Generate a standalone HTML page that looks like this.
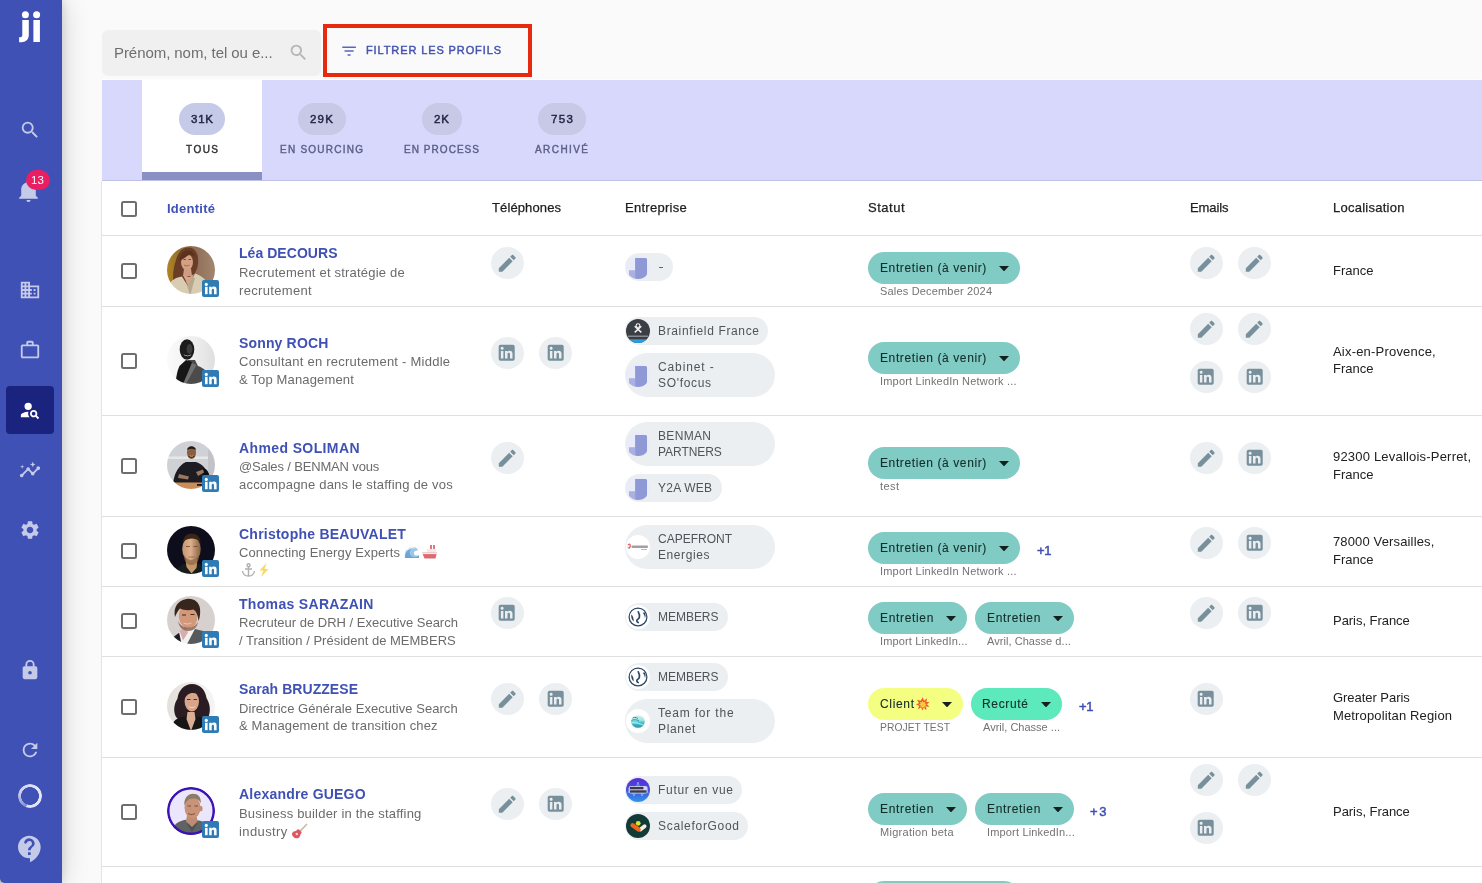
<!DOCTYPE html>
<html><head><meta charset="utf-8"><title>Profils</title><style>
html,body{margin:0;padding:0;}
body{width:1482px;height:883px;overflow:hidden;background:#fafafa;position:relative;font-family:"Liberation Sans",sans-serif;}
body>div,body>span,body>svg{position:absolute;display:block;}
body>span{white-space:nowrap;line-height:20px;will-change:transform;}
</style></head><body>
<div style="left:102px;top:181px;width:1380px;height:702px;background:#fff;"></div>
<div style="left:101px;top:181px;width:1px;height:702px;background:#e4e4e4;"></div>
<div style="left:102px;top:79px;width:1380px;height:1px;background:rgba(255,255,255,.7);"></div>
<div style="left:102px;top:80px;width:1380px;height:100px;background:#d7d8fc;"></div>
<div style="left:102px;top:180px;width:1380px;height:1px;background:#bfc0e6;"></div>
<div style="left:142px;top:80px;width:120px;height:100px;background:#fff;"></div>
<div style="left:142px;top:172px;width:120px;height:8px;background:#8a90c4;"></div>
<div style="left:102px;top:30px;width:219px;height:46px;background:#f0f0f0;border-radius:6px;"></div>
<span style="left:113.80px;top:43.00px;font-size:15px;font-weight:400;color:#6e6e6e;letter-spacing:-0.064px;">Prénom, nom, tel ou e...</span>
<svg style="left:288.00px;top:42.20px;" width="21" height="21" viewBox="0 0 24 24"><path fill="#b5b5b5" d="M9.5,3A6.5,6.5 0 0,1 16,9.5C16,11.11 15.41,12.59 14.44,13.73L14.71,14H15.5L20.5,19L19,20.5L14,15.5V14.71L13.73,14.44C12.59,15.41 11.11,16 9.5,16A6.5,6.5 0 0,1 3,9.5A6.5,6.5 0 0,1 9.5,3M9.5,5C7,5 5,7 5,9.5C5,12 7,14 9.5,14C12,14 14,12 14,9.5C14,7 12,5 9.5,5Z"/></svg>
<div style="left:323px;top:24px;width:201px;height:45px;border:4px solid #e6290f;"></div>
<svg style="left:339.90px;top:41.70px;" width="18.2" height="18.2" viewBox="0 0 24 24"><path fill="#5c64c2" d="M6,13H18V11H6M3,6V8H21V6M10,18H14V16H10V18Z"/></svg>
<span style="left:365.80px;top:40.00px;font-size:11px;font-weight:400;color:#4452b0;letter-spacing:0.889px;-webkit-text-stroke:.45px #4452b0;">FILTRER LES PROFILS</span>
<div style="left:179.0px;top:103px;width:46px;height:32px;background:#c5cae9;border-radius:16px;"></div>
<span style="left:190.60px;top:109.00px;font-size:11.5px;font-weight:400;color:#1f2340;letter-spacing:0.769px;-webkit-text-stroke:.45px #1f2340;">31K</span>
<span style="left:185.60px;top:140.00px;font-size:10px;font-weight:400;color:#2f2f33;letter-spacing:1.467px;-webkit-text-stroke:.4px #2f2f33;">TOUS</span>
<div style="left:298.0px;top:103px;width:48px;height:32px;background:#c8c9e6;border-radius:16px;"></div>
<span style="left:310.15px;top:109.00px;font-size:11.5px;font-weight:400;color:#1f2340;letter-spacing:1.219px;-webkit-text-stroke:.45px #1f2340;">29K</span>
<span style="left:280.40px;top:140.00px;font-size:10px;font-weight:400;color:#5b5f88;letter-spacing:1.244px;-webkit-text-stroke:.4px #5b5f88;">EN SOURCING</span>
<div style="left:421.75px;top:103px;width:40.5px;height:32px;background:#c8c9e6;border-radius:16px;"></div>
<span style="left:434.15px;top:109.00px;font-size:11.5px;font-weight:400;color:#1f2340;letter-spacing:0.834px;-webkit-text-stroke:.45px #1f2340;">2K</span>
<span style="left:404.40px;top:140.00px;font-size:10px;font-weight:400;color:#5b5f88;letter-spacing:1.048px;-webkit-text-stroke:.4px #5b5f88;">EN PROCESS</span>
<div style="left:538.0px;top:103px;width:48px;height:32px;background:#c8c9e6;border-radius:16px;"></div>
<span style="left:550.65px;top:109.00px;font-size:11.5px;font-weight:400;color:#1f2340;letter-spacing:1.356px;-webkit-text-stroke:.45px #1f2340;">753</span>
<span style="left:535.40px;top:140.00px;font-size:10px;font-weight:400;color:#5b5f88;letter-spacing:1.424px;-webkit-text-stroke:.4px #5b5f88;">ARCHIVÉ</span>
<div style="left:102px;top:235px;width:1380px;height:1px;background:#e0e0e0;"></div>
<div style="left:102px;top:306px;width:1380px;height:1px;background:#e0e0e0;"></div>
<div style="left:102px;top:415px;width:1380px;height:1px;background:#e0e0e0;"></div>
<div style="left:102px;top:516px;width:1380px;height:1px;background:#e0e0e0;"></div>
<div style="left:102px;top:586px;width:1380px;height:1px;background:#e0e0e0;"></div>
<div style="left:102px;top:656px;width:1380px;height:1px;background:#e0e0e0;"></div>
<div style="left:102px;top:757px;width:1380px;height:1px;background:#e0e0e0;"></div>
<div style="left:102px;top:866px;width:1380px;height:1px;background:#e0e0e0;"></div>
<div style="left:120.6px;top:200.8px;width:12px;height:12px;border:2px solid #6e6e6e;border-radius:2.5px;"></div>
<span style="left:166.90px;top:199.00px;font-size:13px;font-weight:700;color:#3f51b5;letter-spacing:0.254px;">Identité</span>
<span style="left:491.50px;top:198.00px;font-size:13px;font-weight:400;color:#1e1e1e;letter-spacing:0.118px;-webkit-text-stroke:.25px #1e1e1e;">Téléphones</span>
<span style="left:624.80px;top:198.00px;font-size:13px;font-weight:400;color:#1e1e1e;letter-spacing:0.272px;-webkit-text-stroke:.25px #1e1e1e;">Entreprise</span>
<span style="left:867.70px;top:198.00px;font-size:13px;font-weight:400;color:#1e1e1e;letter-spacing:0.527px;-webkit-text-stroke:.25px #1e1e1e;">Statut</span>
<span style="left:1189.70px;top:198.00px;font-size:13px;font-weight:400;color:#1e1e1e;letter-spacing:-0.101px;-webkit-text-stroke:.25px #1e1e1e;">Emails</span>
<span style="left:1332.70px;top:198.00px;font-size:13px;font-weight:400;color:#1e1e1e;letter-spacing:0.249px;-webkit-text-stroke:.25px #1e1e1e;">Localisation</span>
<div style="left:120.6px;top:262.8px;width:12px;height:12px;border:2px solid #6e6e6e;border-radius:2.5px;"></div>
<svg style="left:167px;top:246px" width="48" height="48" viewBox="0 0 48 48"><defs><clipPath id="a1"><circle cx="24" cy="24" r="24"/></clipPath><filter id="fa1" x="-10%" y="-10%" width="120%" height="120%"><feGaussianBlur stdDeviation="0.55"/></filter><linearGradient id="g1" x1="0" y1="0" x2="1" y2="0"><stop offset="0" stop-color="#bb8b1b"/><stop offset=".28" stop-color="#97712f"/><stop offset=".6" stop-color="#8f705a"/><stop offset="1" stop-color="#a98b73"/></linearGradient></defs><g clip-path="url(#a1)"><g filter="url(#fa1)"><rect x="-4" y="-4" width="56" height="56" fill="url(#g1)"/><path d="M6.500 38c-1-9 0-17 2.500-24C11 6 16 1 22 1.500c5.500.5 8.500 5 9 10.500.5 6-.5 10-2.500 14l-5 10H7z" fill="#693c26"/><ellipse cx="20" cy="16.300" rx="6" ry="8.200" fill="#d3a083"/><path d="M12.500 15.500c0-6.500 3-10.500 8-11 4.500 0 7 2.500 7.500 6.500-3-2.500-6-2.500-8.500-.5-2 1.500-4.500 3-7 5z" fill="#5b331f"/><path d="M16.500 13.500h2.500M21.500 13.500h2.500" stroke="#5a3a2c" stroke-width=".8"/><path d="M17 19c1.500 1.200 4 1.200 5.500 0" stroke="#a85a4c" stroke-width=".9" fill="none"/><path d="M17 22.500h7l1 7.500h-9z" fill="#cf9b82"/><path d="M1 40c3-6 8-8.500 14-9.500l6 10 7-13c6 2 10 5 13 10.500V52H1z" fill="#d8cdb3"/><path d="M16 29l5.500 11.500 5.500-12.500-4.500 3z" fill="#d5a48b"/><path d="M20.500 40.500l4.500-9.500 3 1-5 18z" fill="#b5a98f"/></g></g></svg>
<svg style="left:202px;top:280px" width="17" height="17" viewBox="0 0 17 17"><rect width="17" height="17" rx="2" fill="#2f7bb6"/><circle cx="4.3" cy="4.4" r="1.55" fill="#fff"/><rect x="3" y="6.8" width="2.6" height="7.4" fill="#fff"/><path fill="#fff" d="M7.2 6.8h2.5v1.1c.45-.8 1.3-1.3 2.3-1.3 1.9 0 2.6 1.2 2.6 3.1v4.5h-2.6v-4c0-.9-.3-1.5-1.1-1.5-.8 0-1.2.6-1.2 1.5v4H7.2z"/></svg>
<span style="left:239.20px;top:243.00px;font-size:14px;font-weight:700;color:#3f51b5;letter-spacing:0.048px;">Léa DECOURS</span>
<span style="left:239.20px;top:263.00px;font-size:13px;font-weight:400;color:#6b6b6b;letter-spacing:0.203px;">Recrutement et stratégie de</span>
<span style="left:239.20px;top:281.00px;font-size:13px;font-weight:400;color:#6b6b6b;letter-spacing:0.334px;">recrutement</span>
<div style="left:490.8px;top:246.7px;width:32.8px;height:32.8px;background:#eceff1;border-radius:50%;"></div>
<svg style="left:495.65px;top:251.55px;" width="22.5" height="22.5" viewBox="0 0 24 24"><path fill="#78909c" d="M20.71,7.04C21.1,6.65 21.1,6 20.71,5.63L18.37,3.29C18,2.9 17.35,2.9 16.96,3.29L15.12,5.12L18.87,8.87M3,17.25V21H6.75L17.81,9.93L14.06,6.18L3,17.25Z"/></svg>
<div style="left:625.3px;top:253px;width:47.7px;height:28px;background:#eceff1;border-radius:14px;"></div>
<svg style="left:626.3px;top:255px" width="24" height="24" viewBox="0 0 24 24"><defs><clipPath id="c626_255"><circle cx="12" cy="12" r="12"/></clipPath></defs><g clip-path="url(#c626_255)"><rect width="24" height="24" fill="#e9ebf8"/><path fill="#a9b0e2" d="M3 15.3h6.2V24H7a4 4 0 0 1-4-4z"/><path fill="#8e99d5" d="M9.1 3h11.9v15.5a5.5 5.5 0 0 1-5.5 5.5H9.1z"/></g></svg>
<div style="left:659.2px;top:266.5px;width:3.8px;height:1px;background:#666;"></div>
<div style="left:868px;top:252px;width:152px;height:32px;background:#80cbc4;border-radius:16px;"></div>
<span style="left:879.80px;top:258.00px;font-size:12px;font-weight:400;color:#142e2b;letter-spacing:0.607px;-webkit-text-stroke:.12px #142e2b;">Entretien (à venir)</span>
<svg style="left:998.90px;top:265.60px" width="10" height="5.4" viewBox="0 0 10 5.4"><path d="M0 0h10L5 5.4z" fill="#14201f"/></svg>
<span style="left:879.70px;top:281.00px;font-size:11px;font-weight:400;color:#737373;letter-spacing:0.176px;">Sales December 2024</span>
<div style="left:1189.8px;top:246.7px;width:32.8px;height:32.8px;background:#eceff1;border-radius:50%;"></div>
<svg style="left:1194.65px;top:251.55px;" width="22.5" height="22.5" viewBox="0 0 24 24"><path fill="#78909c" d="M20.71,7.04C21.1,6.65 21.1,6 20.71,5.63L18.37,3.29C18,2.9 17.35,2.9 16.96,3.29L15.12,5.12L18.87,8.87M3,17.25V21H6.75L17.81,9.93L14.06,6.18L3,17.25Z"/></svg>
<div style="left:1238.3px;top:246.7px;width:32.8px;height:32.8px;background:#eceff1;border-radius:50%;"></div>
<svg style="left:1243.15px;top:251.55px;" width="22.5" height="22.5" viewBox="0 0 24 24"><path fill="#78909c" d="M20.71,7.04C21.1,6.65 21.1,6 20.71,5.63L18.37,3.29C18,2.9 17.35,2.9 16.96,3.29L15.12,5.12L18.87,8.87M3,17.25V21H6.75L17.81,9.93L14.06,6.18L3,17.25Z"/></svg>
<span style="left:1332.70px;top:261.00px;font-size:13px;font-weight:400;color:#212121;letter-spacing:-0.012px;">France</span>
<div style="left:120.6px;top:352.8px;width:12px;height:12px;border:2px solid #6e6e6e;border-radius:2.5px;"></div>
<svg style="left:167px;top:336px" width="48" height="48" viewBox="0 0 48 48"><defs><clipPath id="a2"><circle cx="24" cy="24" r="24"/></clipPath><filter id="fa2" x="-10%" y="-10%" width="120%" height="120%"><feGaussianBlur stdDeviation="0.55"/></filter><linearGradient id="g2" x1="0" y1="0" x2="1" y2="0"><stop offset="0" stop-color="#fcfcfc"/><stop offset=".5" stop-color="#f1f1f1"/><stop offset="1" stop-color="#dcdcdc"/></linearGradient></defs><g clip-path="url(#a2)"><g filter="url(#fa2)"><rect x="-4" y="-4" width="56" height="56" fill="url(#g2)"/><path d="M9 50c0-11 2-18 9-21l3-5h7l3 6c6 2 10 6 11 12v8z" fill="#4b4b4b"/><path d="M12.500 30l6.500-6 6 2-8 23h-8c0-8 1-14 3.500-19z" fill="#141414"/><path d="M25 27l4.500 2-11 20h-3z" fill="#707070"/><ellipse cx="20" cy="13.500" rx="7.300" ry="10.300" fill="#1b1b1b"/><ellipse cx="22.500" cy="13" rx="3" ry="5" fill="#3c3c3c"/><path d="M16.500 18c2 2.200 6 2.200 8 0-1 3-7 3-8 0z" fill="#f2f2f2"/></g></g></svg>
<svg style="left:202px;top:370px" width="17" height="17" viewBox="0 0 17 17"><rect width="17" height="17" rx="2" fill="#2f7bb6"/><circle cx="4.3" cy="4.4" r="1.55" fill="#fff"/><rect x="3" y="6.8" width="2.6" height="7.4" fill="#fff"/><path fill="#fff" d="M7.2 6.8h2.5v1.1c.45-.8 1.3-1.3 2.3-1.3 1.9 0 2.6 1.2 2.6 3.1v4.5h-2.6v-4c0-.9-.3-1.5-1.1-1.5-.8 0-1.2.6-1.2 1.5v4H7.2z"/></svg>
<span style="left:239.20px;top:333.00px;font-size:14px;font-weight:700;color:#3f51b5;letter-spacing:0.157px;">Sonny ROCH</span>
<span style="left:239.20px;top:352.00px;font-size:13px;font-weight:400;color:#6b6b6b;letter-spacing:0.241px;">Consultant en recrutement - Middle</span>
<span style="left:239.20px;top:370.00px;font-size:13px;font-weight:400;color:#6b6b6b;letter-spacing:0.151px;">&amp; Top Management</span>
<div style="left:490.8px;top:336.7px;width:32.8px;height:32.8px;background:#eceff1;border-radius:50%;"></div>
<svg style="left:496.30px;top:342.00px;" width="21.4" height="21.4" viewBox="0 0 24 24"><path fill="#78909c" d="M19 3A2 2 0 0 1 21 5V19A2 2 0 0 1 19 21H5A2 2 0 0 1 3 19V5A2 2 0 0 1 5 3H19M18.5 18.5V13.2A3.26 3.26 0 0 0 15.24 9.94C14.39 9.94 13.4 10.46 12.92 11.24V10.13H10.13V18.5H12.92V13.57C12.92 12.8 13.54 12.17 14.31 12.17A1.4 1.4 0 0 1 15.71 13.57V18.5H18.5M6.88 8.56A1.68 1.68 0 0 0 8.56 6.88C8.56 5.95 7.81 5.19 6.88 5.19A1.69 1.69 0 0 0 5.19 6.88C5.19 7.81 5.95 8.56 6.88 8.56M8.27 18.5V10.13H5.5V18.5H8.27Z"/></svg>
<div style="left:539.3px;top:336.7px;width:32.8px;height:32.8px;background:#eceff1;border-radius:50%;"></div>
<svg style="left:544.80px;top:342.00px;" width="21.4" height="21.4" viewBox="0 0 24 24"><path fill="#78909c" d="M19 3A2 2 0 0 1 21 5V19A2 2 0 0 1 19 21H5A2 2 0 0 1 3 19V5A2 2 0 0 1 5 3H19M18.5 18.5V13.2A3.26 3.26 0 0 0 15.24 9.94C14.39 9.94 13.4 10.46 12.92 11.24V10.13H10.13V18.5H12.92V13.57C12.92 12.8 13.54 12.17 14.31 12.17A1.4 1.4 0 0 1 15.71 13.57V18.5H18.5M6.88 8.56A1.68 1.68 0 0 0 8.56 6.88C8.56 5.95 7.81 5.19 6.88 5.19A1.69 1.69 0 0 0 5.19 6.88C5.19 7.81 5.95 8.56 6.88 8.56M8.27 18.5V10.13H5.5V18.5H8.27Z"/></svg>
<div style="left:625.3px;top:317px;width:142.5px;height:28px;background:#eceff1;border-radius:14.0px;"></div>
<svg style="left:626.3px;top:319.0px" width="24" height="24" viewBox="0 0 24 24"><defs><clipPath id="cb"><circle cx="12" cy="12" r="12"/></clipPath></defs><g clip-path="url(#cb)"><rect width="24" height="24" fill="#3b3e44"/><rect y="20.300" width="24" height="4" fill="#2a9edb"/><rect x="2" y="16.500" width="20" height="1.500" fill="#85888d"/><circle cx="12" cy="6.6" r="1.9" fill="none" stroke="#f2f2f2" stroke-width="1.1"/><path d="M8.7 7.2l6.6 6.2M15.3 7.2l-6.6 6.2" stroke="#f2f2f2" stroke-width="1.5" fill="none"/></g></svg>
<span style="left:657.90px;top:321.00px;font-size:12px;font-weight:400;color:#4f5458;letter-spacing:0.643px;">Brainfield France</span>
<div style="left:625.3px;top:353px;width:149.6px;height:44px;background:#eceff1;border-radius:22.0px;"></div>
<svg style="left:626.3px;top:363.0px" width="24" height="24" viewBox="0 0 24 24"><defs><clipPath id="c626_363"><circle cx="12" cy="12" r="12"/></clipPath></defs><g clip-path="url(#c626_363)"><rect width="24" height="24" fill="#e9ebf8"/><path fill="#a9b0e2" d="M3 15.3h6.2V24H7a4 4 0 0 1-4-4z"/><path fill="#8e99d5" d="M9.1 3h11.9v15.5a5.5 5.5 0 0 1-5.5 5.5H9.1z"/></g></svg>
<span style="left:657.90px;top:357.00px;font-size:12px;font-weight:400;color:#4f5458;letter-spacing:0.876px;">Cabinet -</span>
<span style="left:657.90px;top:373.00px;font-size:12px;font-weight:400;color:#4f5458;letter-spacing:0.670px;">SO&#x27;focus</span>
<div style="left:868px;top:342px;width:152px;height:32px;background:#80cbc4;border-radius:16px;"></div>
<span style="left:879.80px;top:348.00px;font-size:12px;font-weight:400;color:#142e2b;letter-spacing:0.607px;-webkit-text-stroke:.12px #142e2b;">Entretien (à venir)</span>
<svg style="left:998.90px;top:355.60px" width="10" height="5.4" viewBox="0 0 10 5.4"><path d="M0 0h10L5 5.4z" fill="#14201f"/></svg>
<span style="left:879.70px;top:371.00px;font-size:11px;font-weight:400;color:#737373;letter-spacing:0.198px;">Import LinkedIn Network ...</span>
<div style="left:1189.8px;top:312.7px;width:32.8px;height:32.8px;background:#eceff1;border-radius:50%;"></div>
<svg style="left:1194.65px;top:317.55px;" width="22.5" height="22.5" viewBox="0 0 24 24"><path fill="#78909c" d="M20.71,7.04C21.1,6.65 21.1,6 20.71,5.63L18.37,3.29C18,2.9 17.35,2.9 16.96,3.29L15.12,5.12L18.87,8.87M3,17.25V21H6.75L17.81,9.93L14.06,6.18L3,17.25Z"/></svg>
<div style="left:1238.3px;top:312.7px;width:32.8px;height:32.8px;background:#eceff1;border-radius:50%;"></div>
<svg style="left:1243.15px;top:317.55px;" width="22.5" height="22.5" viewBox="0 0 24 24"><path fill="#78909c" d="M20.71,7.04C21.1,6.65 21.1,6 20.71,5.63L18.37,3.29C18,2.9 17.35,2.9 16.96,3.29L15.12,5.12L18.87,8.87M3,17.25V21H6.75L17.81,9.93L14.06,6.18L3,17.25Z"/></svg>
<div style="left:1189.8px;top:360.7px;width:32.8px;height:32.8px;background:#eceff1;border-radius:50%;"></div>
<svg style="left:1195.30px;top:366.00px;" width="21.4" height="21.4" viewBox="0 0 24 24"><path fill="#78909c" d="M19 3A2 2 0 0 1 21 5V19A2 2 0 0 1 19 21H5A2 2 0 0 1 3 19V5A2 2 0 0 1 5 3H19M18.5 18.5V13.2A3.26 3.26 0 0 0 15.24 9.94C14.39 9.94 13.4 10.46 12.92 11.24V10.13H10.13V18.5H12.92V13.57C12.92 12.8 13.54 12.17 14.31 12.17A1.4 1.4 0 0 1 15.71 13.57V18.5H18.5M6.88 8.56A1.68 1.68 0 0 0 8.56 6.88C8.56 5.95 7.81 5.19 6.88 5.19A1.69 1.69 0 0 0 5.19 6.88C5.19 7.81 5.95 8.56 6.88 8.56M8.27 18.5V10.13H5.5V18.5H8.27Z"/></svg>
<div style="left:1238.3px;top:360.7px;width:32.8px;height:32.8px;background:#eceff1;border-radius:50%;"></div>
<svg style="left:1243.80px;top:366.00px;" width="21.4" height="21.4" viewBox="0 0 24 24"><path fill="#78909c" d="M19 3A2 2 0 0 1 21 5V19A2 2 0 0 1 19 21H5A2 2 0 0 1 3 19V5A2 2 0 0 1 5 3H19M18.5 18.5V13.2A3.26 3.26 0 0 0 15.24 9.94C14.39 9.94 13.4 10.46 12.92 11.24V10.13H10.13V18.5H12.92V13.57C12.92 12.8 13.54 12.17 14.31 12.17A1.4 1.4 0 0 1 15.71 13.57V18.5H18.5M6.88 8.56A1.68 1.68 0 0 0 8.56 6.88C8.56 5.95 7.81 5.19 6.88 5.19A1.69 1.69 0 0 0 5.19 6.88C5.19 7.81 5.95 8.56 6.88 8.56M8.27 18.5V10.13H5.5V18.5H8.27Z"/></svg>
<span style="left:1332.70px;top:342.00px;font-size:13px;font-weight:400;color:#212121;letter-spacing:0.199px;">Aix-en-Provence,</span>
<span style="left:1332.70px;top:359.00px;font-size:13px;font-weight:400;color:#212121;letter-spacing:-0.012px;">France</span>
<div style="left:120.6px;top:457.8px;width:12px;height:12px;border:2px solid #6e6e6e;border-radius:2.5px;"></div>
<svg style="left:167px;top:441px" width="48" height="48" viewBox="0 0 48 48"><defs><clipPath id="a3"><circle cx="24" cy="24" r="24"/></clipPath><filter id="fa3" x="-10%" y="-10%" width="120%" height="120%"><feGaussianBlur stdDeviation="0.55"/></filter></defs><g clip-path="url(#a3)"><g filter="url(#fa3)"><rect x="-4" y="-4" width="56" height="56" fill="#d0d1d4"/><rect x="-4" y="15.500" width="56" height="2.500" fill="#e6e7ea"/><rect x="41" y="-4" width="11" height="56" fill="#c2c3c7"/><path d="M6 43c1-11 6-19 13-22h10c7 2 11 8 12 14l1 8H6z" fill="#1c1d21"/><path d="M36 27c5 1 7 6 7 14h-7z" fill="#101115"/><ellipse cx="24.500" cy="11.800" rx="4.500" ry="6.200" fill="#8d5d41"/><path d="M20 9c.5-5 8.500-5 9 0-3-1.800-6-1.800-9 0z" fill="#241c19"/><path d="M21 14c.8 3.500 6.200 3.500 7 0-1 2-6 2-7 0z" fill="#2b211d"/><path d="M22.500 14.300c1.200 1.100 2.900 1.100 4 0-.6 1.600-3.400 1.600-4 0z" fill="#f7f1f1"/><path d="M12 33l10 2.500-1 3-10-1.500zM29 31l7-2.500 1 3-6 3.500z" fill="#9b7662"/><path d="M-2 41.500h52v10H-2z" fill="#cc8d59"/><rect x="30" y="43" width="6" height="1.800" fill="#1b1b1b"/></g></g></svg>
<svg style="left:202px;top:475px" width="17" height="17" viewBox="0 0 17 17"><rect width="17" height="17" rx="2" fill="#2f7bb6"/><circle cx="4.3" cy="4.4" r="1.55" fill="#fff"/><rect x="3" y="6.8" width="2.6" height="7.4" fill="#fff"/><path fill="#fff" d="M7.2 6.8h2.5v1.1c.45-.8 1.3-1.3 2.3-1.3 1.9 0 2.6 1.2 2.6 3.1v4.5h-2.6v-4c0-.9-.3-1.5-1.1-1.5-.8 0-1.2.6-1.2 1.5v4H7.2z"/></svg>
<span style="left:239.20px;top:438.00px;font-size:14px;font-weight:700;color:#3f51b5;letter-spacing:0.384px;">Ahmed SOLIMAN</span>
<span style="left:239.20px;top:457.00px;font-size:13px;font-weight:400;color:#6b6b6b;letter-spacing:-0.155px;">@Sales / BENMAN vous</span>
<span style="left:239.20px;top:475.00px;font-size:13px;font-weight:400;color:#6b6b6b;letter-spacing:0.198px;">accompagne dans le staffing de vos</span>
<div style="left:490.8px;top:441.7px;width:32.8px;height:32.8px;background:#eceff1;border-radius:50%;"></div>
<svg style="left:495.65px;top:446.55px;" width="22.5" height="22.5" viewBox="0 0 24 24"><path fill="#78909c" d="M20.71,7.04C21.1,6.65 21.1,6 20.71,5.63L18.37,3.29C18,2.9 17.35,2.9 16.96,3.29L15.12,5.12L18.87,8.87M3,17.25V21H6.75L17.81,9.93L14.06,6.18L3,17.25Z"/></svg>
<div style="left:625.3px;top:422px;width:149.6px;height:44px;background:#eceff1;border-radius:22.0px;"></div>
<svg style="left:626.3px;top:432.0px" width="24" height="24" viewBox="0 0 24 24"><defs><clipPath id="c626_432"><circle cx="12" cy="12" r="12"/></clipPath></defs><g clip-path="url(#c626_432)"><rect width="24" height="24" fill="#e9ebf8"/><path fill="#a9b0e2" d="M3 15.3h6.2V24H7a4 4 0 0 1-4-4z"/><path fill="#8e99d5" d="M9.1 3h11.9v15.5a5.5 5.5 0 0 1-5.5 5.5H9.1z"/></g></svg>
<span style="left:657.90px;top:426.00px;font-size:12px;font-weight:400;color:#4f5458;letter-spacing:0.332px;">BENMAN</span>
<span style="left:657.90px;top:442.00px;font-size:12px;font-weight:400;color:#4f5458;letter-spacing:-0.062px;">PARTNERS</span>
<div style="left:625.3px;top:474px;width:96.6px;height:28px;background:#eceff1;border-radius:14.0px;"></div>
<svg style="left:626.3px;top:476.0px" width="24" height="24" viewBox="0 0 24 24"><defs><clipPath id="c626_476"><circle cx="12" cy="12" r="12"/></clipPath></defs><g clip-path="url(#c626_476)"><rect width="24" height="24" fill="#e9ebf8"/><path fill="#a9b0e2" d="M3 15.3h6.2V24H7a4 4 0 0 1-4-4z"/><path fill="#8e99d5" d="M9.1 3h11.9v15.5a5.5 5.5 0 0 1-5.5 5.5H9.1z"/></g></svg>
<span style="left:657.90px;top:478.00px;font-size:12px;font-weight:400;color:#4f5458;letter-spacing:0.225px;">Y2A WEB</span>
<div style="left:868px;top:447px;width:152px;height:32px;background:#80cbc4;border-radius:16px;"></div>
<span style="left:879.80px;top:453.00px;font-size:12px;font-weight:400;color:#142e2b;letter-spacing:0.607px;-webkit-text-stroke:.12px #142e2b;">Entretien (à venir)</span>
<svg style="left:998.90px;top:460.60px" width="10" height="5.4" viewBox="0 0 10 5.4"><path d="M0 0h10L5 5.4z" fill="#14201f"/></svg>
<span style="left:879.70px;top:476.00px;font-size:11px;font-weight:400;color:#737373;letter-spacing:0.423px;">test</span>
<div style="left:1189.8px;top:441.7px;width:32.8px;height:32.8px;background:#eceff1;border-radius:50%;"></div>
<svg style="left:1194.65px;top:446.55px;" width="22.5" height="22.5" viewBox="0 0 24 24"><path fill="#78909c" d="M20.71,7.04C21.1,6.65 21.1,6 20.71,5.63L18.37,3.29C18,2.9 17.35,2.9 16.96,3.29L15.12,5.12L18.87,8.87M3,17.25V21H6.75L17.81,9.93L14.06,6.18L3,17.25Z"/></svg>
<div style="left:1238.3px;top:441.7px;width:32.8px;height:32.8px;background:#eceff1;border-radius:50%;"></div>
<svg style="left:1243.80px;top:447.00px;" width="21.4" height="21.4" viewBox="0 0 24 24"><path fill="#78909c" d="M19 3A2 2 0 0 1 21 5V19A2 2 0 0 1 19 21H5A2 2 0 0 1 3 19V5A2 2 0 0 1 5 3H19M18.5 18.5V13.2A3.26 3.26 0 0 0 15.24 9.94C14.39 9.94 13.4 10.46 12.92 11.24V10.13H10.13V18.5H12.92V13.57C12.92 12.8 13.54 12.17 14.31 12.17A1.4 1.4 0 0 1 15.71 13.57V18.5H18.5M6.88 8.56A1.68 1.68 0 0 0 8.56 6.88C8.56 5.95 7.81 5.19 6.88 5.19A1.69 1.69 0 0 0 5.19 6.88C5.19 7.81 5.95 8.56 6.88 8.56M8.27 18.5V10.13H5.5V18.5H8.27Z"/></svg>
<span style="left:1332.70px;top:447.00px;font-size:13px;font-weight:400;color:#212121;letter-spacing:0.196px;">92300 Levallois-Perret,</span>
<span style="left:1332.70px;top:465.00px;font-size:13px;font-weight:400;color:#212121;letter-spacing:-0.012px;">France</span>
<div style="left:120.6px;top:543.3px;width:12px;height:12px;border:2px solid #6e6e6e;border-radius:2.5px;"></div>
<svg style="left:167px;top:526px" width="48" height="48" viewBox="0 0 48 48"><defs><clipPath id="a4"><circle cx="24" cy="24" r="24"/></clipPath><filter id="fa4" x="-10%" y="-10%" width="120%" height="120%"><feGaussianBlur stdDeviation="0.55"/></filter><linearGradient id="g4" x1="0" y1="0" x2="1" y2="0"><stop offset="0" stop-color="#c39670"/><stop offset=".45" stop-color="#dfb08c"/><stop offset="1" stop-color="#85603f"/></linearGradient></defs><g clip-path="url(#a4)"><g filter="url(#fa4)"><rect x="-4" y="-4" width="56" height="56" fill="#090a1b"/><path d="M8 50c1-8 6-12 13-13h8c6 1 10 5 11 13z" fill="#191c1b"/><path d="M18.500 33h12l-1 9-5 5.500-5-6.500z" fill="#c4986a"/><ellipse cx="24.500" cy="23" rx="9.300" ry="12.600" fill="url(#g4)"/><path d="M15.500 18.500c0-8 4.500-11 9.500-11 5.500 0 9 4 8.500 11-1.500-4-3-5.800-8.500-6-5.500.2-8 1.800-9.500 6z" fill="#3a2614"/><path d="M16.500 27c2 9 13 9 16 0-.5 10-4 12-8 12s-7.500-2-8-12z" fill="#8b6544" opacity=".7"/><path d="M19 20.500h4M26.500 20.500h4" stroke="#5a3a26" stroke-width="1" opacity=".7"/><path d="M21.500 31h6.500" stroke="#8b5848" stroke-width=".9" opacity=".8"/></g></g></svg>
<svg style="left:202px;top:560px" width="17" height="17" viewBox="0 0 17 17"><rect width="17" height="17" rx="2" fill="#2f7bb6"/><circle cx="4.3" cy="4.4" r="1.55" fill="#fff"/><rect x="3" y="6.8" width="2.6" height="7.4" fill="#fff"/><path fill="#fff" d="M7.2 6.8h2.5v1.1c.45-.8 1.3-1.3 2.3-1.3 1.9 0 2.6 1.2 2.6 3.1v4.5h-2.6v-4c0-.9-.3-1.5-1.1-1.5-.8 0-1.2.6-1.2 1.5v4H7.2z"/></svg>
<span style="left:239.20px;top:524.00px;font-size:14px;font-weight:700;color:#3f51b5;letter-spacing:0.237px;">Christophe BEAUVALET</span>
<span style="left:239.20px;top:543.00px;font-size:13px;font-weight:400;color:#6b6b6b;letter-spacing:0.114px;">Connecting Energy Experts</span>
<svg style="left:403.5px;top:545px" width="16" height="14" viewBox="0 0 16 14"><path d="M1 13c-1-6 2-11 8-11 3 0 5 2 5 4-2-1-4 0-4 2 0 3 3 3 5 2v3z" fill="#9cc6e6"/><path d="M1 13c0-4 2-8 6-9-2 2-2 5 0 7 2 1.500 5 1.500 8 0v2z" fill="#6fa3d3"/><path d="M3 5c2-2 5-3 8-2" stroke="#eaf4fb" stroke-width="1.200" fill="none"/></svg>
<svg style="left:421.5px;top:545px" width="15" height="14" viewBox="0 0 15 14"><rect x="8" y="0" width="2" height="5" fill="#df7a78"/><rect x="11" y="0" width="2" height="5" fill="#df7a78"/><rect x="5" y="4" width="9" height="4" fill="#f1ecec"/><path d="M0 7.500h15l-1.500 6h-11z" fill="#dc6a72"/><rect x="0" y="7.500" width="15" height="1.600" fill="#f4eded"/></svg>
<svg style="left:240.5px;top:563px" width="15" height="14" viewBox="0 0 15 14"><g fill="none" stroke="#b0b0b0" stroke-width="1.400"><circle cx="7.500" cy="2.300" r="1.500"/><path d="M7.500 3.800v9M4 6h7M1.500 8c.5 3 3 5 6 5s5.500-2 6-5"/></g></svg>
<svg style="left:258px;top:563px" width="12" height="14" viewBox="0 0 12 14"><path d="M8.500 0L1.500 7.500h3.800L3 14l7.500-8H6.600z" fill="#f6d868"/></svg>
<div style="left:625.3px;top:525px;width:149.6px;height:44px;background:#eceff1;border-radius:22.0px;"></div>
<svg style="left:626.3px;top:535.0px" width="24" height="24" viewBox="0 0 24 24"><circle cx="12" cy="12" r="12" fill="#fff"/><path d="M2 10.2c.6-1.6 2-1.6 2.2-.2.2 1.500-.8 3-1.600 3.200" stroke="#e04a4a" stroke-width="1.100" fill="none"/><path d="M1.600 11.800c.4 1 1.200 1.400 2 1.300" stroke="#5aa5dd" stroke-width="1" fill="none"/><rect x="5.500" y="10.600" width="16.500" height="2.300" rx=".8" fill="#55504f" opacity=".55"/><rect x="15" y="14" width="6" height="1" fill="#bbb"/></svg>
<span style="left:657.90px;top:529.00px;font-size:12px;font-weight:400;color:#4f5458;">CAPEFRONT</span>
<span style="left:657.90px;top:545.00px;font-size:12px;font-weight:400;color:#4f5458;letter-spacing:0.577px;">Energies</span>
<div style="left:868px;top:532px;width:152px;height:32px;background:#80cbc4;border-radius:16px;"></div>
<span style="left:879.80px;top:538.00px;font-size:12px;font-weight:400;color:#142e2b;letter-spacing:0.607px;-webkit-text-stroke:.12px #142e2b;">Entretien (à venir)</span>
<svg style="left:998.90px;top:545.60px" width="10" height="5.4" viewBox="0 0 10 5.4"><path d="M0 0h10L5 5.4z" fill="#14201f"/></svg>
<span style="left:1036.60px;top:541.00px;font-size:13px;font-weight:400;color:#3f51b5;letter-spacing:-0.422px;-webkit-text-stroke:.5px #3f51b5;">+1</span>
<span style="left:879.70px;top:561.00px;font-size:11px;font-weight:400;color:#737373;letter-spacing:0.198px;">Import LinkedIn Network ...</span>
<div style="left:1189.8px;top:526.7px;width:32.8px;height:32.8px;background:#eceff1;border-radius:50%;"></div>
<svg style="left:1194.65px;top:531.55px;" width="22.5" height="22.5" viewBox="0 0 24 24"><path fill="#78909c" d="M20.71,7.04C21.1,6.65 21.1,6 20.71,5.63L18.37,3.29C18,2.9 17.35,2.9 16.96,3.29L15.12,5.12L18.87,8.87M3,17.25V21H6.75L17.81,9.93L14.06,6.18L3,17.25Z"/></svg>
<div style="left:1238.3px;top:526.7px;width:32.8px;height:32.8px;background:#eceff1;border-radius:50%;"></div>
<svg style="left:1243.80px;top:532.00px;" width="21.4" height="21.4" viewBox="0 0 24 24"><path fill="#78909c" d="M19 3A2 2 0 0 1 21 5V19A2 2 0 0 1 19 21H5A2 2 0 0 1 3 19V5A2 2 0 0 1 5 3H19M18.5 18.5V13.2A3.26 3.26 0 0 0 15.24 9.94C14.39 9.94 13.4 10.46 12.92 11.24V10.13H10.13V18.5H12.92V13.57C12.92 12.8 13.54 12.17 14.31 12.17A1.4 1.4 0 0 1 15.71 13.57V18.5H18.5M6.88 8.56A1.68 1.68 0 0 0 8.56 6.88C8.56 5.95 7.81 5.19 6.88 5.19A1.69 1.69 0 0 0 5.19 6.88C5.19 7.81 5.95 8.56 6.88 8.56M8.27 18.5V10.13H5.5V18.5H8.27Z"/></svg>
<span style="left:1332.70px;top:532.00px;font-size:13px;font-weight:400;color:#212121;letter-spacing:0.143px;">78000 Versailles,</span>
<span style="left:1332.70px;top:550.00px;font-size:13px;font-weight:400;color:#212121;letter-spacing:-0.012px;">France</span>
<div style="left:120.6px;top:613.3px;width:12px;height:12px;border:2px solid #6e6e6e;border-radius:2.5px;"></div>
<svg style="left:167px;top:596px" width="48" height="48" viewBox="0 0 48 48"><defs><clipPath id="a5"><circle cx="24" cy="24" r="24"/></clipPath><filter id="fa5" x="-10%" y="-10%" width="120%" height="120%"><feGaussianBlur stdDeviation="0.55"/></filter></defs><g clip-path="url(#a5)"><g filter="url(#fa5)"><rect x="-4" y="-4" width="56" height="56" fill="#d6d1cf"/><path d="M3 50c0-7 4-11 10-13l11-5 12 3c6 2 9 7 9 15z" fill="#565a5b"/><path d="M5 43l8-7 5 11-7 3z" fill="#1e1e21"/><path d="M12 36l8-5 10-2-11 21h-4z" fill="#f4f2f0"/><path d="M12.500 35l6.500-3.500 2 5-5 8z" fill="#b96a70" opacity=".5"/><ellipse cx="21" cy="20.500" rx="9.200" ry="11.800" fill="#d29879" transform="rotate(-8 21 20.500)"/><path d="M11 25c1 6.500 5 10 10.500 10s8.500-3.500 9.500-9c-2 3.500-5 5.500-9.500 5.500S13 29.500 11 25z" fill="#8a6655" opacity=".85"/><path d="M8 21c-2-9.500 3-17 11.500-18 7.500-1 12.500 3 13.500 9.500.5 4.500 0 8.500-1.500 12.500-.5-5.500-2-9.500-5-11.500-4.500 1-9.500 1-13.500-1-2 2-3.500 5-5 8.500z" fill="#38281f"/><path d="M15 19h4M23.500 18.500h4" stroke="#3d2a20" stroke-width="1"/><path d="M16.500 27c2.300 1.300 5.500 1.300 7.800 0" stroke="#f0ddd5" stroke-width=".9" fill="none" opacity=".85"/></g></g></svg>
<svg style="left:202px;top:630.5px" width="17" height="17" viewBox="0 0 17 17"><rect width="17" height="17" rx="2" fill="#2f7bb6"/><circle cx="4.3" cy="4.4" r="1.55" fill="#fff"/><rect x="3" y="6.8" width="2.6" height="7.4" fill="#fff"/><path fill="#fff" d="M7.2 6.8h2.5v1.1c.45-.8 1.3-1.3 2.3-1.3 1.9 0 2.6 1.2 2.6 3.1v4.5h-2.6v-4c0-.9-.3-1.5-1.1-1.5-.8 0-1.2.6-1.2 1.5v4H7.2z"/></svg>
<span style="left:239.20px;top:594.00px;font-size:14px;font-weight:700;color:#3f51b5;letter-spacing:0.322px;">Thomas SARAZAIN</span>
<span style="left:239.20px;top:613.00px;font-size:13px;font-weight:400;color:#6b6b6b;">Recruteur de DRH / Executive Search</span>
<span style="left:239.20px;top:631.00px;font-size:13px;font-weight:400;color:#6b6b6b;">/ Transition / Président de MEMBERS</span>
<div style="left:490.8px;top:596.7px;width:32.8px;height:32.8px;background:#eceff1;border-radius:50%;"></div>
<svg style="left:496.30px;top:602.00px;" width="21.4" height="21.4" viewBox="0 0 24 24"><path fill="#78909c" d="M19 3A2 2 0 0 1 21 5V19A2 2 0 0 1 19 21H5A2 2 0 0 1 3 19V5A2 2 0 0 1 5 3H19M18.5 18.5V13.2A3.26 3.26 0 0 0 15.24 9.94C14.39 9.94 13.4 10.46 12.92 11.24V10.13H10.13V18.5H12.92V13.57C12.92 12.8 13.54 12.17 14.31 12.17A1.4 1.4 0 0 1 15.71 13.57V18.5H18.5M6.88 8.56A1.68 1.68 0 0 0 8.56 6.88C8.56 5.95 7.81 5.19 6.88 5.19A1.69 1.69 0 0 0 5.19 6.88C5.19 7.81 5.95 8.56 6.88 8.56M8.27 18.5V10.13H5.5V18.5H8.27Z"/></svg>
<div style="left:625.3px;top:603.3px;width:102.7px;height:28px;background:#eceff1;border-radius:14.0px;"></div>
<svg style="left:626.3px;top:605.3px" width="24" height="24" viewBox="0 0 24 24"><circle cx="12" cy="12" r="12" fill="#fff"/><circle cx="12" cy="11.900" r="8.900" fill="none" stroke="#2c4562" stroke-width="1.250"/><path d="M5.400 9.300C4.800 12 5.600 14.800 7.700 16.400 7.800 13.600 7 11.400 5.400 9.300z" fill="#2c4562"/><path d="M18.900 7.600c.9 1.700.9 3.600.1 5.300-.3-2-1.100-3.700-2.400-5.100z" fill="#2c4562"/><path d="M12.300 6.800c1 1.800 1.500 3.800 1 5.800-.4 1.400-2.300 1.700-2.500 3-.1.900.6 1.600 1.400 1.900" stroke="#2c4562" stroke-width="1.700" fill="none" stroke-linecap="round"/></svg>
<span style="left:657.90px;top:607.00px;font-size:12px;font-weight:400;color:#4f5458;letter-spacing:-0.029px;">MEMBERS</span>
<div style="left:868px;top:602px;width:99px;height:32px;background:#80cbc4;border-radius:16px;"></div>
<span style="left:879.80px;top:608.00px;font-size:12px;font-weight:400;color:#142e2b;letter-spacing:0.659px;-webkit-text-stroke:.12px #142e2b;">Entretien</span>
<svg style="left:945.90px;top:615.60px" width="10" height="5.4" viewBox="0 0 10 5.4"><path d="M0 0h10L5 5.4z" fill="#14201f"/></svg>
<div style="left:975px;top:602px;width:99px;height:32px;background:#80cbc4;border-radius:16px;"></div>
<span style="left:986.80px;top:608.00px;font-size:12px;font-weight:400;color:#142e2b;letter-spacing:0.659px;-webkit-text-stroke:.12px #142e2b;">Entretien</span>
<svg style="left:1052.90px;top:615.60px" width="10" height="5.4" viewBox="0 0 10 5.4"><path d="M0 0h10L5 5.4z" fill="#14201f"/></svg>
<span style="left:879.70px;top:631.00px;font-size:11px;font-weight:400;color:#737373;letter-spacing:0.148px;">Import LinkedIn...</span>
<span style="left:986.70px;top:631.00px;font-size:11px;font-weight:400;color:#737373;letter-spacing:0.051px;">Avril, Chasse d...</span>
<div style="left:1189.8px;top:596.7px;width:32.8px;height:32.8px;background:#eceff1;border-radius:50%;"></div>
<svg style="left:1194.65px;top:601.55px;" width="22.5" height="22.5" viewBox="0 0 24 24"><path fill="#78909c" d="M20.71,7.04C21.1,6.65 21.1,6 20.71,5.63L18.37,3.29C18,2.9 17.35,2.9 16.96,3.29L15.12,5.12L18.87,8.87M3,17.25V21H6.75L17.81,9.93L14.06,6.18L3,17.25Z"/></svg>
<div style="left:1238.3px;top:596.7px;width:32.8px;height:32.8px;background:#eceff1;border-radius:50%;"></div>
<svg style="left:1243.80px;top:602.00px;" width="21.4" height="21.4" viewBox="0 0 24 24"><path fill="#78909c" d="M19 3A2 2 0 0 1 21 5V19A2 2 0 0 1 19 21H5A2 2 0 0 1 3 19V5A2 2 0 0 1 5 3H19M18.5 18.5V13.2A3.26 3.26 0 0 0 15.24 9.94C14.39 9.94 13.4 10.46 12.92 11.24V10.13H10.13V18.5H12.92V13.57C12.92 12.8 13.54 12.17 14.31 12.17A1.4 1.4 0 0 1 15.71 13.57V18.5H18.5M6.88 8.56A1.68 1.68 0 0 0 8.56 6.88C8.56 5.95 7.81 5.19 6.88 5.19A1.69 1.69 0 0 0 5.19 6.88C5.19 7.81 5.95 8.56 6.88 8.56M8.27 18.5V10.13H5.5V18.5H8.27Z"/></svg>
<span style="left:1332.70px;top:611.00px;font-size:13px;font-weight:400;color:#212121;letter-spacing:-0.042px;">Paris, France</span>
<div style="left:120.6px;top:698.8px;width:12px;height:12px;border:2px solid #6e6e6e;border-radius:2.5px;"></div>
<svg style="left:167px;top:682px" width="48" height="48" viewBox="0 0 48 48"><defs><clipPath id="a6"><circle cx="24" cy="24" r="24"/></clipPath><filter id="fa6" x="-10%" y="-10%" width="120%" height="120%"><feGaussianBlur stdDeviation="0.55"/></filter><linearGradient id="g6" x1="0" y1="0" x2="1" y2="0"><stop offset="0" stop-color="#e2ded9"/><stop offset="1" stop-color="#f8f7f5"/></linearGradient></defs><g clip-path="url(#a6)"><g filter="url(#fa6)"><rect x="-4" y="-4" width="56" height="56" fill="url(#g6)"/><path d="M9 35c-3-6-2-13 1.500-18.500C11.500 8.500 17 2 25 2c8.500 0 13.500 6.500 14.500 14 3.500 5.500 4.500 12.500 2 19l-6 4H13z" fill="#2a1f21"/><path d="M4 50c0-9 4-14 12-15l8-1 9 1c8 1 12 6 12 15z" fill="#131318"/><path d="M20.500 30h7l1 7-4.500 12-4.500-12z" fill="#dbad95"/><ellipse cx="24.800" cy="19.500" rx="7.200" ry="10" fill="#d8a58b"/><path d="M16.500 17.500c1-7.500 5-11 9.500-11s7.500 3.500 8 9.500c-2-3-4-5-8-5-4.500 0-6.500 2.500-9.500 6.500z" fill="#2a1f21"/><path d="M20 17.500h3.500M26.500 17.500H30" stroke="#4a3028" stroke-width="1"/><path d="M21.500 24c2 1.800 5 1.800 7 0-1.500 2.800-5.500 2.800-7 0z" fill="#f4e4de"/></g></g></svg>
<svg style="left:202px;top:716px" width="17" height="17" viewBox="0 0 17 17"><rect width="17" height="17" rx="2" fill="#2f7bb6"/><circle cx="4.3" cy="4.4" r="1.55" fill="#fff"/><rect x="3" y="6.8" width="2.6" height="7.4" fill="#fff"/><path fill="#fff" d="M7.2 6.8h2.5v1.1c.45-.8 1.3-1.3 2.3-1.3 1.9 0 2.6 1.2 2.6 3.1v4.5h-2.6v-4c0-.9-.3-1.5-1.1-1.5-.8 0-1.2.6-1.2 1.5v4H7.2z"/></svg>
<span style="left:239.20px;top:679.00px;font-size:14px;font-weight:700;color:#3f51b5;letter-spacing:0.058px;">Sarah BRUZZESE</span>
<span style="left:239.20px;top:699.00px;font-size:13px;font-weight:400;color:#6b6b6b;letter-spacing:0.053px;">Directrice Générale Executive Search</span>
<span style="left:239.20px;top:716.00px;font-size:13px;font-weight:400;color:#6b6b6b;letter-spacing:0.164px;">&amp; Management de transition chez</span>
<div style="left:490.8px;top:682.7px;width:32.8px;height:32.8px;background:#eceff1;border-radius:50%;"></div>
<svg style="left:495.65px;top:687.55px;" width="22.5" height="22.5" viewBox="0 0 24 24"><path fill="#78909c" d="M20.71,7.04C21.1,6.65 21.1,6 20.71,5.63L18.37,3.29C18,2.9 17.35,2.9 16.96,3.29L15.12,5.12L18.87,8.87M3,17.25V21H6.75L17.81,9.93L14.06,6.18L3,17.25Z"/></svg>
<div style="left:539.3px;top:682.7px;width:32.8px;height:32.8px;background:#eceff1;border-radius:50%;"></div>
<svg style="left:544.80px;top:688.00px;" width="21.4" height="21.4" viewBox="0 0 24 24"><path fill="#78909c" d="M19 3A2 2 0 0 1 21 5V19A2 2 0 0 1 19 21H5A2 2 0 0 1 3 19V5A2 2 0 0 1 5 3H19M18.5 18.5V13.2A3.26 3.26 0 0 0 15.24 9.94C14.39 9.94 13.4 10.46 12.92 11.24V10.13H10.13V18.5H12.92V13.57C12.92 12.8 13.54 12.17 14.31 12.17A1.4 1.4 0 0 1 15.71 13.57V18.5H18.5M6.88 8.56A1.68 1.68 0 0 0 8.56 6.88C8.56 5.95 7.81 5.19 6.88 5.19A1.69 1.69 0 0 0 5.19 6.88C5.19 7.81 5.95 8.56 6.88 8.56M8.27 18.5V10.13H5.5V18.5H8.27Z"/></svg>
<div style="left:625.3px;top:663px;width:102.7px;height:28px;background:#eceff1;border-radius:14.0px;"></div>
<svg style="left:626.3px;top:665.0px" width="24" height="24" viewBox="0 0 24 24"><circle cx="12" cy="12" r="12" fill="#fff"/><circle cx="12" cy="11.900" r="8.900" fill="none" stroke="#2c4562" stroke-width="1.250"/><path d="M5.400 9.300C4.800 12 5.600 14.800 7.700 16.400 7.800 13.600 7 11.400 5.400 9.300z" fill="#2c4562"/><path d="M18.900 7.600c.9 1.700.9 3.600.1 5.300-.3-2-1.100-3.700-2.400-5.100z" fill="#2c4562"/><path d="M12.300 6.800c1 1.800 1.500 3.800 1 5.800-.4 1.400-2.300 1.700-2.500 3-.1.900.6 1.600 1.400 1.900" stroke="#2c4562" stroke-width="1.700" fill="none" stroke-linecap="round"/></svg>
<span style="left:657.90px;top:667.00px;font-size:12px;font-weight:400;color:#4f5458;letter-spacing:-0.029px;">MEMBERS</span>
<div style="left:625.3px;top:698.8px;width:149.6px;height:44px;background:#eceff1;border-radius:22.0px;"></div>
<svg style="left:626.3px;top:708.8px" width="24" height="24" viewBox="0 0 24 24"><defs><linearGradient id="gt" x1="0" y1="0" x2="0" y2="1"><stop offset="0" stop-color="#dff6f0"/><stop offset=".42" stop-color="#9fe3df"/><stop offset=".55" stop-color="#4fc3cd"/><stop offset="1" stop-color="#27889c"/></linearGradient><clipPath id="ct"><ellipse cx="12" cy="12.500" rx="6.800" ry="6.300"/></clipPath></defs><circle cx="12" cy="12" r="12" fill="#fff"/><g clip-path="url(#ct)"><rect x="4" y="5" width="16" height="15" fill="url(#gt)"/><path d="M5 9.500c2.500-1.500 5-1.500 7 0M5 11.600c3-1.400 6-1 8 .3" stroke="#2f98a8" stroke-width="1" fill="none"/><path d="M4.500 13c4-1 8 0 15 3.500v1c-6-3-11-3.500-15-2.500z" fill="#8ef0ee"/></g></svg>
<span style="left:657.90px;top:703.00px;font-size:12px;font-weight:400;color:#4f5458;letter-spacing:0.809px;">Team for the</span>
<span style="left:657.90px;top:719.00px;font-size:12px;font-weight:400;color:#4f5458;letter-spacing:0.675px;">Planet</span>
<div style="left:868px;top:688px;width:94.7px;height:32px;background:#f4ff81;border-radius:16px;"></div>
<span style="left:879.80px;top:694.00px;font-size:12px;font-weight:400;color:#142e2b;letter-spacing:0.664px;-webkit-text-stroke:.12px #142e2b;">Client</span>
<svg style="left:941.60px;top:701.60px" width="10" height="5.4" viewBox="0 0 10 5.4"><path d="M0 0h10L5 5.4z" fill="#14201f"/></svg>
<svg style="left:916.3px;top:697px" width="13.500" height="14" viewBox="0 0 14 14"><path d="M7 0l1.300 3.600L11.500 1l-.8 3.900 3.300.1-2.600 2.300L14 9.800l-3.500-.2.300 3.900L8 11l-1.700 3-.8-3.600L2 12.500l1.200-3.700L0 7.500l3.100-1.600L1 2.600l3.700.9z" fill="#ef5b2e"/><path d="M7 3.500l.8 2 1.900-1-.5 2 2 .4-1.600 1.300 1.300 1.600-2-.1.100 2L7.600 10l-1 1.600-.5-2-1.900.7.700-1.900L3 7.500l1.800-.9-.9-1.800 2 .4z" fill="#f9c842"/></svg>
<div style="left:970.5px;top:688px;width:91.6px;height:32px;background:#5ce9bb;border-radius:16px;"></div>
<span style="left:982.30px;top:694.00px;font-size:12px;font-weight:400;color:#142e2b;letter-spacing:0.664px;-webkit-text-stroke:.12px #142e2b;">Recruté</span>
<svg style="left:1041.00px;top:701.60px" width="10" height="5.4" viewBox="0 0 10 5.4"><path d="M0 0h10L5 5.4z" fill="#14201f"/></svg>
<span style="left:1079.20px;top:697.00px;font-size:13px;font-weight:400;color:#3f51b5;letter-spacing:-0.422px;-webkit-text-stroke:.5px #3f51b5;">+1</span>
<span style="left:879.70px;top:718.00px;font-size:10.3px;font-weight:400;color:#737373;letter-spacing:0.050px;">PROJET TEST</span>
<span style="left:982.70px;top:717.00px;font-size:11px;font-weight:400;color:#737373;letter-spacing:0.011px;">Avril, Chasse ...</span>
<div style="left:1189.8px;top:682.7px;width:32.8px;height:32.8px;background:#eceff1;border-radius:50%;"></div>
<svg style="left:1195.30px;top:688.00px;" width="21.4" height="21.4" viewBox="0 0 24 24"><path fill="#78909c" d="M19 3A2 2 0 0 1 21 5V19A2 2 0 0 1 19 21H5A2 2 0 0 1 3 19V5A2 2 0 0 1 5 3H19M18.5 18.5V13.2A3.26 3.26 0 0 0 15.24 9.94C14.39 9.94 13.4 10.46 12.92 11.24V10.13H10.13V18.5H12.92V13.57C12.92 12.8 13.54 12.17 14.31 12.17A1.4 1.4 0 0 1 15.71 13.57V18.5H18.5M6.88 8.56A1.68 1.68 0 0 0 8.56 6.88C8.56 5.95 7.81 5.19 6.88 5.19A1.69 1.69 0 0 0 5.19 6.88C5.19 7.81 5.95 8.56 6.88 8.56M8.27 18.5V10.13H5.5V18.5H8.27Z"/></svg>
<span style="left:1332.70px;top:688.00px;font-size:13px;font-weight:400;color:#212121;letter-spacing:-0.042px;">Greater Paris</span>
<span style="left:1332.70px;top:706.00px;font-size:13px;font-weight:400;color:#212121;letter-spacing:0.147px;">Metropolitan Region</span>
<div style="left:120.6px;top:803.8px;width:12px;height:12px;border:2px solid #6e6e6e;border-radius:2.5px;"></div>
<svg style="left:167px;top:787px" width="48" height="48" viewBox="0 0 48 48"><defs><clipPath id="a7"><circle cx="24" cy="24" r="24"/></clipPath><filter id="fa7" x="-10%" y="-10%" width="120%" height="120%"><feGaussianBlur stdDeviation="0.55"/></filter></defs><g clip-path="url(#a7)"><g filter="url(#fa7)"><rect x="-4" y="-4" width="56" height="56" fill="#ebe6fb"/><path d="M4 50c0-10 5-15 13-17l8-1 9 2c7 2 10 7 10 16z" fill="#5e6364"/><path d="M22 34l3 5 3-5 2 3-5 8-5-8z" fill="#4d5253"/><path d="M20 28h9.500l1 6.500-5.500 5.500-6-5.500z" fill="#bd8c72"/><ellipse cx="25.500" cy="20.500" rx="8" ry="10.800" fill="#c89377"/><ellipse cx="34" cy="21.500" rx="1.600" ry="2.800" fill="#c38d72"/><path d="M17.300 18.500c-.5-7.500 3.700-11.800 8.700-11.800s8.300 3.300 7.800 9.500c-1.500-3-3-4.700-7.800-4.700s-6.700 2.800-8.700 7z" fill="#8a7b69"/><path d="M20.500 19h3.500M27.500 19H31" stroke="#6a4a3a" stroke-width=".9"/><path d="M21 26.500c2 1.200 5 1.200 7 0" stroke="#94584a" stroke-width="1.200" fill="none"/></g><circle cx="24" cy="24" r="22.800" fill="none" stroke="#3b12b8" stroke-width="2.600"/></g></svg>
<svg style="left:202px;top:821px" width="17" height="17" viewBox="0 0 17 17"><rect width="17" height="17" rx="2" fill="#2f7bb6"/><circle cx="4.3" cy="4.4" r="1.55" fill="#fff"/><rect x="3" y="6.8" width="2.6" height="7.4" fill="#fff"/><path fill="#fff" d="M7.2 6.8h2.5v1.1c.45-.8 1.3-1.3 2.3-1.3 1.9 0 2.6 1.2 2.6 3.1v4.5h-2.6v-4c0-.9-.3-1.5-1.1-1.5-.8 0-1.2.6-1.2 1.5v4H7.2z"/></svg>
<span style="left:239.20px;top:784.00px;font-size:14px;font-weight:700;color:#3f51b5;letter-spacing:0.207px;">Alexandre GUEGO</span>
<span style="left:239.20px;top:804.00px;font-size:13px;font-weight:400;color:#6b6b6b;letter-spacing:0.200px;">Business builder in the staffing</span>
<span style="left:239.20px;top:822.00px;font-size:13px;font-weight:400;color:#6b6b6b;letter-spacing:0.397px;">industry</span>
<svg style="left:290.5px;top:823px" width="17" height="16" viewBox="0 0 17 16"><path d="M15.500.5l1 1-7 7.500-1.200-1.200z" fill="#c9b8a8"/><path d="M2 9c1-1 2.500-.5 3.500-1.500S7 6 8 6.500l2.500 2.500c.5 1-.5 1.500-1 2.500s-.5 3-2.500 3.700c-2 .6-4.500-.7-5.500-2.500S1 10 2 9z" fill="#e0565f"/><circle cx="5.800" cy="11" r="1.200" fill="#f6d7d9"/></svg>
<div style="left:490.8px;top:787.7px;width:32.8px;height:32.8px;background:#eceff1;border-radius:50%;"></div>
<svg style="left:495.65px;top:792.55px;" width="22.5" height="22.5" viewBox="0 0 24 24"><path fill="#78909c" d="M20.71,7.04C21.1,6.65 21.1,6 20.71,5.63L18.37,3.29C18,2.9 17.35,2.9 16.96,3.29L15.12,5.12L18.87,8.87M3,17.25V21H6.75L17.81,9.93L14.06,6.18L3,17.25Z"/></svg>
<div style="left:539.3px;top:787.7px;width:32.8px;height:32.8px;background:#eceff1;border-radius:50%;"></div>
<svg style="left:544.80px;top:793.00px;" width="21.4" height="21.4" viewBox="0 0 24 24"><path fill="#78909c" d="M19 3A2 2 0 0 1 21 5V19A2 2 0 0 1 19 21H5A2 2 0 0 1 3 19V5A2 2 0 0 1 5 3H19M18.5 18.5V13.2A3.26 3.26 0 0 0 15.24 9.94C14.39 9.94 13.4 10.46 12.92 11.24V10.13H10.13V18.5H12.92V13.57C12.92 12.8 13.54 12.17 14.31 12.17A1.4 1.4 0 0 1 15.71 13.57V18.5H18.5M6.88 8.56A1.68 1.68 0 0 0 8.56 6.88C8.56 5.95 7.81 5.19 6.88 5.19A1.69 1.69 0 0 0 5.19 6.88C5.19 7.81 5.95 8.56 6.88 8.56M8.27 18.5V10.13H5.5V18.5H8.27Z"/></svg>
<div style="left:625.3px;top:776px;width:116.4px;height:28px;background:#eceff1;border-radius:14.0px;"></div>
<svg style="left:626.3px;top:778.0px" width="24" height="24" viewBox="0 0 24 24"><defs><linearGradient id="gf" x1="0" y1="0" x2="0" y2="1"><stop offset="0" stop-color="#5c2cd4"/><stop offset=".5" stop-color="#4550de"/><stop offset="1" stop-color="#2d98ea"/></linearGradient></defs><circle cx="12" cy="12" r="12" fill="url(#gf)"/><path d="M1.500 15l3.500-3 3 6 4-14 4 14 3-6 3.500 3" stroke="#7fd0ff" stroke-width=".9" fill="none" opacity=".75"/><rect x="2.600" y="8" width="19" height="7.500" rx="2" fill="#f2f0ff" opacity=".8"/><rect x="3.800" y="8.900" width="13.600" height="2.400" fill="#15131f" opacity=".8"/><rect x="3.800" y="12.300" width="16.800" height="2.400" fill="#15131f" opacity=".8"/></svg>
<span style="left:657.90px;top:780.00px;font-size:12px;font-weight:400;color:#4f5458;letter-spacing:0.694px;">Futur en vue</span>
<div style="left:625.3px;top:812px;width:122.5px;height:28px;background:#eceff1;border-radius:14.0px;"></div>
<svg style="left:626.3px;top:814.0px" width="24" height="24" viewBox="0 0 24 24"><circle cx="12" cy="12" r="12" fill="#123b37"/><path d="M14.400 15.600l4.200-3.400" stroke="#f5efe0" stroke-width="3.800" stroke-linecap="round"/><circle cx="12.200" cy="9.300" r="2.400" fill="#d6e822"/><path d="M6.600 11.200l6 4.300" stroke="#f0641f" stroke-width="4.400" stroke-linecap="round"/></svg>
<span style="left:657.90px;top:816.00px;font-size:12px;font-weight:400;color:#4f5458;letter-spacing:0.693px;">ScaleforGood</span>
<div style="left:868px;top:793px;width:99px;height:32px;background:#80cbc4;border-radius:16px;"></div>
<span style="left:879.80px;top:799.00px;font-size:12px;font-weight:400;color:#142e2b;letter-spacing:0.659px;-webkit-text-stroke:.12px #142e2b;">Entretien</span>
<svg style="left:945.90px;top:806.60px" width="10" height="5.4" viewBox="0 0 10 5.4"><path d="M0 0h10L5 5.4z" fill="#14201f"/></svg>
<div style="left:975px;top:793px;width:99px;height:32px;background:#80cbc4;border-radius:16px;"></div>
<span style="left:986.80px;top:799.00px;font-size:12px;font-weight:400;color:#142e2b;letter-spacing:0.659px;-webkit-text-stroke:.12px #142e2b;">Entretien</span>
<svg style="left:1052.90px;top:806.60px" width="10" height="5.4" viewBox="0 0 10 5.4"><path d="M0 0h10L5 5.4z" fill="#14201f"/></svg>
<span style="left:1089.60px;top:802.00px;font-size:13px;font-weight:400;color:#3f51b5;letter-spacing:1.578px;-webkit-text-stroke:.5px #3f51b5;">+3</span>
<span style="left:879.70px;top:822.00px;font-size:11px;font-weight:400;color:#737373;letter-spacing:0.292px;">Migration beta</span>
<span style="left:986.70px;top:822.00px;font-size:11px;font-weight:400;color:#737373;letter-spacing:0.165px;">Import LinkedIn...</span>
<div style="left:1189.8px;top:763.7px;width:32.8px;height:32.8px;background:#eceff1;border-radius:50%;"></div>
<svg style="left:1194.65px;top:768.55px;" width="22.5" height="22.5" viewBox="0 0 24 24"><path fill="#78909c" d="M20.71,7.04C21.1,6.65 21.1,6 20.71,5.63L18.37,3.29C18,2.9 17.35,2.9 16.96,3.29L15.12,5.12L18.87,8.87M3,17.25V21H6.75L17.81,9.93L14.06,6.18L3,17.25Z"/></svg>
<div style="left:1238.3px;top:763.7px;width:32.8px;height:32.8px;background:#eceff1;border-radius:50%;"></div>
<svg style="left:1243.15px;top:768.55px;" width="22.5" height="22.5" viewBox="0 0 24 24"><path fill="#78909c" d="M20.71,7.04C21.1,6.65 21.1,6 20.71,5.63L18.37,3.29C18,2.9 17.35,2.9 16.96,3.29L15.12,5.12L18.87,8.87M3,17.25V21H6.75L17.81,9.93L14.06,6.18L3,17.25Z"/></svg>
<div style="left:1189.8px;top:811.7px;width:32.8px;height:32.8px;background:#eceff1;border-radius:50%;"></div>
<svg style="left:1195.30px;top:817.00px;" width="21.4" height="21.4" viewBox="0 0 24 24"><path fill="#78909c" d="M19 3A2 2 0 0 1 21 5V19A2 2 0 0 1 19 21H5A2 2 0 0 1 3 19V5A2 2 0 0 1 5 3H19M18.5 18.5V13.2A3.26 3.26 0 0 0 15.24 9.94C14.39 9.94 13.4 10.46 12.92 11.24V10.13H10.13V18.5H12.92V13.57C12.92 12.8 13.54 12.17 14.31 12.17A1.4 1.4 0 0 1 15.71 13.57V18.5H18.5M6.88 8.56A1.68 1.68 0 0 0 8.56 6.88C8.56 5.95 7.81 5.19 6.88 5.19A1.69 1.69 0 0 0 5.19 6.88C5.19 7.81 5.95 8.56 6.88 8.56M8.27 18.5V10.13H5.5V18.5H8.27Z"/></svg>
<span style="left:1332.70px;top:802.00px;font-size:13px;font-weight:400;color:#212121;letter-spacing:-0.042px;">Paris, France</span>
<div style="left:868px;top:881px;width:152px;height:32px;background:#80cbc4;border-radius:16px;"></div>
<div style="left:0;top:0;width:62px;height:883px;background:#3f51b5;box-shadow:1px 0 8px rgba(0,0,0,.11),3px 0 26px rgba(0,0,0,.14);"></div>
<svg style="left:0;top:0" width="62" height="56" viewBox="0 0 62 56"><g fill="#fff"><circle cx="25.400" cy="14.700" r="3.500"/><circle cx="36.600" cy="14.700" r="3.500"/><rect x="33.400" y="20" width="6.500" height="22"/><path d="M22.300 20h6.500v15c0 4.500-3 7.200-7.500 7.200h-2.200v-5h1.400c1.300 0 1.800-.8 1.800-2.200z"/></g></svg>
<svg style="left:18.70px;top:118.50px;" width="22" height="22" viewBox="0 0 24 24"><path fill="#c5cae9" d="M9.5,3A6.5,6.5 0 0,1 16,9.5C16,11.11 15.41,12.59 14.44,13.73L14.71,14H15.5L20.5,19L19,20.5L14,15.5V14.71L13.73,14.44C12.59,15.41 11.11,16 9.5,16A6.5,6.5 0 0,1 3,9.5A6.5,6.5 0 0,1 9.5,3M9.5,5C7,5 5,7 5,9.5C5,12 7,14 9.5,14C12,14 14,12 14,9.5C14,7 12,5 9.5,5Z"/></svg>
<svg style="left:15.50px;top:177.70px;" width="25" height="25" viewBox="0 0 24 24"><path fill="#c5cae9" d="M21,19V20H3V19L5,17V11C5,7.9 7.03,5.17 10,4.29C10,4.19 10,4.1 10,4A2,2 0 0,1 12,2A2,2 0 0,1 14,4C14,4.1 14,4.19 14,4.29C16.97,5.17 19,7.9 19,11V17L21,19M14,21A2,2 0 0,1 12,23A2,2 0 0,1 10,21"/></svg>
<div style="left:26px;top:170px;width:24px;height:20.4px;background:#e91e63;border-radius:10.2px;"></div>
<span style="left:31.10px;top:170.00px;font-size:11.5px;font-weight:400;color:#fff;letter-spacing:0.208px;">13</span>
<svg style="left:18.90px;top:278.70px;" width="22" height="22" viewBox="0 0 24 24"><path fill="#c5cae9" d="M18,15H16V17H18M18,11H16V13H18M20,19H12V17H14V15H12V13H14V11H12V9H20M10,7H8V5H10M10,11H8V9H10M10,15H8V13H10M10,19H8V17H10M6,7H4V5H6M6,11H4V9H6M6,15H4V13H6M6,19H4V17H6M12,7V3H2V21H22V7H12Z"/></svg>
<svg style="left:19.00px;top:339.00px;" width="22" height="22" viewBox="0 0 24 24"><path fill="#c5cae9" d="M20,6C20.58,6 21.05,6.2 21.42,6.59C21.8,7 22,7.45 22,8V19C22,19.55 21.8,20 21.42,20.41C21.05,20.8 20.58,21 20,21H4C3.42,21 2.95,20.8 2.58,20.41C2.2,20 2,19.55 2,19V8C2,7.45 2.2,7 2.58,6.59C2.95,6.2 3.42,6 4,6H8V4C8,3.42 8.2,2.95 8.58,2.58C8.95,2.2 9.42,2 10,2H14C14.58,2 15.05,2.2 15.42,2.58C15.8,2.95 16,3.42 16,4V6H20M4,8V19H20V8H4M14,6V4H10V6H14Z"/></svg>
<div style="left:6px;top:386px;width:48px;height:48px;background:#1a237e;border-radius:4px;"></div>
<svg style="left:19.00px;top:399.00px;" width="22" height="22" viewBox="0 0 24 24"><path fill="#fff" d="M6 8a4 4 0 1 0 8 0a4 4 0 1 0-8 0 M10.35 14.01C7.62 13.91 2 15.27 2 18v2h9.54c-2.47-2.76-1.23-5.89-1.19-5.99z M19.43 18.02c.36-.59.57-1.28.57-2.02 0-2.21-1.79-4-4-4s-4 1.79-4 4 1.79 4 4 4c.74 0 1.43-.22 2.02-.57L20.59 22 22 20.59l-2.57-2.57zM16 18c-1.1 0-2-.9-2-2s.9-2 2-2 2 .9 2 2-.9 2-2 2z"/></svg>
<svg style="left:19.00px;top:459.00px;" width="22" height="22" viewBox="0 0 24 24"><path fill="#c5cae9" d="M21 8c-1.45 0-2.26 1.44-1.93 2.51l-3.55 3.56c-.3-.09-.74-.09-1.04 0l-2.55-2.55C12.27 10.45 11.46 9 10 9c-1.45 0-2.27 1.44-1.93 2.52l-4.56 4.55C2.44 15.74 1 16.55 1 18c0 1.1.9 2 2 2 1.45 0 2.26-1.44 1.93-2.51l4.55-4.56c.3.09.74.09 1.04 0l2.55 2.55C12.73 16.55 13.54 18 15 18c1.45 0 2.27-1.44 1.93-2.52l3.56-3.55c1.07.33 2.51-.48 2.51-1.93 0-1.1-.9-2-2-2z M15 9l.94-2.07L18 6l-2.06-.93L15 3l-.92 2.07L12 6l2.08.93z M3.5 11L4 9l2-.5L4 8l-.5-2L3 8l-2 .5L3 9z"/></svg>
<svg style="left:19.00px;top:519.00px;" width="22" height="22" viewBox="0 0 24 24"><path fill="#c5cae9" d="M19.14,12.94c0.04-0.3,0.06-0.61,0.06-0.94c0-0.32-0.02-0.64-0.07-0.94l2.03-1.58c0.18-0.14,0.23-0.41,0.12-0.61 l-1.92-3.32c-0.12-0.22-0.37-0.29-0.59-0.22l-2.39,0.96c-0.5-0.38-1.03-0.7-1.62-0.94L14.4,2.81c-0.04-0.24-0.24-0.41-0.48-0.41 h-3.84c-0.24,0-0.43,0.17-0.47,0.41L9.25,5.35C8.66,5.59,8.12,5.92,7.63,6.29L5.24,5.33c-0.22-0.08-0.47,0-0.59,0.22L2.74,8.87 C2.62,9.08,2.66,9.34,2.86,9.48l2.03,1.58C4.84,11.36,4.8,11.69,4.8,12s0.02,0.64,0.07,0.94l-2.03,1.58 c-0.18,0.14-0.23,0.41-0.12,0.61l1.92,3.32c0.12,0.22,0.37,0.29,0.59,0.22l2.39-0.96c0.5,0.38,1.03,0.7,1.62,0.94l0.36,2.54 c0.05,0.24,0.24,0.41,0.48,0.41h3.84c0.24,0,0.44-0.17,0.47-0.41l0.36-2.54c0.59-0.24,1.13-0.56,1.62-0.94l2.39,0.96 c0.22,0.08,0.47,0,0.59-0.22l1.92-3.32c0.12-0.22,0.07-0.47-0.12-0.61L19.14,12.94z M12,15.6c-1.98,0-3.6-1.62-3.6-3.6 s1.62-3.6,3.6-3.6s3.6,1.62,3.6,3.6S13.98,15.6,12,15.6z"/></svg>
<svg style="left:19.00px;top:659.00px;" width="22" height="22" viewBox="0 0 24 24"><path fill="#c5cae9" d="M12,17A2,2 0 0,0 14,15C14,13.89 13.1,13 12,13A2,2 0 0,0 10,15A2,2 0 0,0 12,17M18,8A2,2 0 0,1 20,10V20A2,2 0 0,1 18,22H6A2,2 0 0,1 4,20V10C4,8.89 4.9,8 6,8H7V6A5,5 0 0,1 12,1A5,5 0 0,1 17,6V8H18M12,3A3,3 0 0,0 9,6V8H15V6A3,3 0 0,0 12,3Z"/></svg>
<svg style="left:19.00px;top:738.50px;" width="22" height="22" viewBox="0 0 24 24"><path fill="#c5cae9" d="M17.65,6.35C16.2,4.9 14.21,4 12,4A8,8 0 0,0 4,12A8,8 0 0,0 12,20C15.73,20 18.84,17.45 19.73,14H17.65C16.83,16.33 14.61,18 12,18A6,6 0 0,1 6,12A6,6 0 0,1 12,6C13.66,6 15.14,6.69 16.22,7.78L13,11H20V4L17.65,6.35Z"/></svg>
<div style="left:18px;top:784px;width:24px;height:24px;border-radius:50%;background:conic-gradient(from 200deg,#7f8bd0 0deg,#c9cef0 90deg,#e3e6fa 200deg,#dfe2f8 360deg);-webkit-mask:radial-gradient(circle,transparent 8.6px,#000 9.2px);mask:radial-gradient(circle,transparent 8.6px,#000 9.2px);"></div>
<svg style="left:14.00px;top:833.20px;" width="32" height="32" viewBox="0 0 24 24"><path fill="#c5cae9" d="M11.5 2C6.81 2 3 5.81 3 10.5S6.81 19 11.5 19h.5v3c4.86-2.34 8-7 8-11.5C20 5.81 16.19 2 11.5 2zm1 14.5h-2v-2h2v2zm.4-4.78c-.01.01-.02.03-.03.05-.05.08-.1.16-.14.24-.02.03-.03.07-.04.11-.03.07-.06.14-.08.21-.07.21-.1.43-.1.68H10.5c0-.51.08-.94.2-1.3 0-.01 0-.02.01-.03.01-.04.04-.06.05-.1.06-.16.13-.3.22-.44.03-.05.07-.1.1-.15.03-.04.05-.09.08-.12l.01.01c.84-1.1 2.21-1.44 2.32-2.68.09-.98-.61-1.93-1.57-2.13-1.04-.22-1.98.39-2.3 1.28-.14.36-.47.65-.88.65h-.2c-.6 0-1.04-.59-.87-1.17.55-1.82 2.37-3.09 4.43-2.79 1.69.25 3.04 1.64 3.33 3.33.44 2.44-1.63 3.03-2.53 4.35z"/></svg>
<div style="left:0;top:879px;width:4px;height:4px;background:radial-gradient(circle at 100% 0,transparent 3.4px,#bdbdbd 4px);"></div>
</body></html>
